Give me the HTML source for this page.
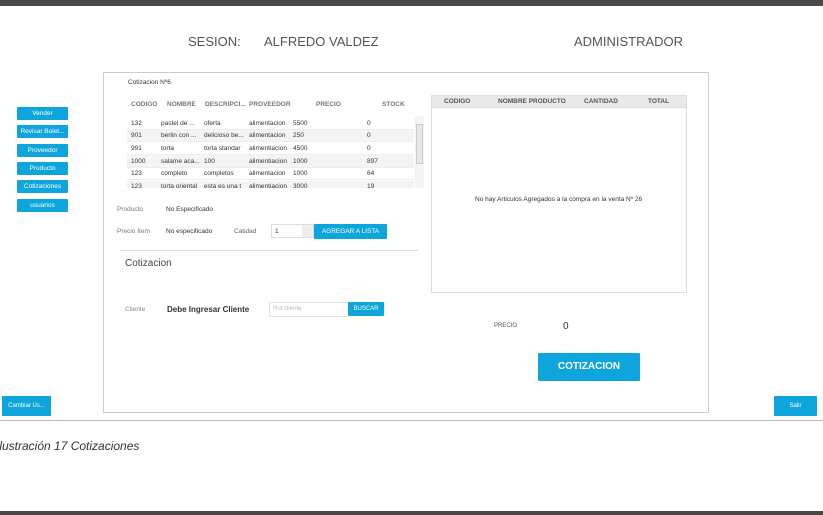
<!DOCTYPE html>
<html><head><meta charset="utf-8"><style>
*{margin:0;padding:0;box-sizing:border-box}
body{width:823px;height:515px;background:#fff;position:relative;overflow:hidden;font-family:"Liberation Sans",sans-serif;color:#444}
.a{position:absolute;white-space:nowrap}
.btn{position:absolute;background:#0ea5dc;color:#fff;font-size:6.5px;text-align:center;border-radius:1px}
.t{font-size:6.5px;color:#333}
.h{font-size:6.5px;color:#777;font-weight:bold}
.row{position:absolute;left:127px;width:287px;height:12.7px;border-bottom:1px solid #eee}
.row span{position:absolute;top:2.5px;font-size:6.5px;color:#333}
</style></head><body>
<div class="a" style="left:0;top:0;width:823px;height:6px;background:#4a4846"></div>
<div class="a" style="left:0;top:511px;width:823px;height:4px;background:#4a4846"></div>

<div class="a" style="left:188px;top:34px;font-size:13px;color:#555">SESION:</div>
<div class="a" style="left:264px;top:34px;font-size:13px;color:#555">ALFREDO VALDEZ</div>
<div class="a" style="left:574px;top:34px;font-size:13px;color:#555">ADMINISTRADOR</div>

<div class="btn" style="left:17px;top:107px;width:51px;height:13px;line-height:13px">Vender</div>
<div class="btn" style="left:17px;top:125px;width:51px;height:13px;line-height:13px">Revisar Bolet...</div>
<div class="btn" style="left:17px;top:144px;width:51px;height:13px;line-height:13px">Proveedor</div>
<div class="btn" style="left:17px;top:162px;width:51px;height:13px;line-height:13px">Producto</div>
<div class="btn" style="left:17px;top:180px;width:51px;height:13px;line-height:13px">Cotizaciones</div>
<div class="btn" style="left:17px;top:199px;width:51px;height:13px;line-height:13px">usuarios</div>
<div class="btn" style="left:2px;top:396px;width:49px;height:20px;line-height:20px;font-size:6px">Cambiar Us...</div>
<div class="btn" style="left:774px;top:396px;width:43px;height:20px;line-height:20px;font-size:6px">Salir</div>

<div class="a" style="left:103px;top:72px;width:606px;height:341px;border:1px solid #ccc"></div>
<div class="a" style="left:0;top:420px;width:823px;height:1px;background:#bbb"></div>
<div class="a" style="left:-4px;top:439px;font-size:12px;font-style:italic;color:#333">Ilustración 17 Cotizaciones</div>

<div class="a t" style="left:128px;top:79px">Cotizacion Nº6</div>
<div class="a h" style="left:131px;top:101px">CODIGO</div>
<div class="a h" style="left:167px;top:101px">NOMBRE</div>
<div class="a h" style="left:205px;top:101px">DESCRIPCI...</div>
<div class="a h" style="left:249px;top:101px">PROVEEDOR</div>
<div class="a h" style="left:316px;top:101px">PRECIO</div>
<div class="a h" style="left:382px;top:101px">STOCK</div>

<div class="a" style="left:127px;top:117px;width:287px;height:71px;overflow:hidden">
<div class="row" style="left:0;top:0"><span style="left:4px">132</span><span style="left:34px">pastel de ...</span><span style="left:77px">oferta</span><span style="left:122px">alimentacion</span><span style="left:166px">5500</span><span style="left:240px">0</span></div>
<div class="row" style="left:0;top:12.7px;background:#f4f4f4"><span style="left:4px">901</span><span style="left:34px">berlin con ...</span><span style="left:77px">delicioso be...</span><span style="left:122px">alimentacion</span><span style="left:166px">250</span><span style="left:240px">0</span></div>
<div class="row" style="left:0;top:25.4px"><span style="left:4px">991</span><span style="left:34px">torta</span><span style="left:77px">torta standar</span><span style="left:122px">alimentiacion</span><span style="left:166px">4500</span><span style="left:240px">0</span></div>
<div class="row" style="left:0;top:38.1px;background:#f4f4f4"><span style="left:4px">1000</span><span style="left:34px">salame aca...</span><span style="left:77px">100</span><span style="left:122px">alimentiacion</span><span style="left:166px">1000</span><span style="left:240px">897</span></div>
<div class="row" style="left:0;top:50.8px"><span style="left:4px">123</span><span style="left:34px">completo</span><span style="left:77px">completos</span><span style="left:122px">alimentacion</span><span style="left:166px">1000</span><span style="left:240px">64</span></div>
<div class="row" style="left:0;top:63.5px;background:#f4f4f4"><span style="left:4px">123</span><span style="left:34px">torta oriental</span><span style="left:77px">esta es una t</span><span style="left:122px">alimentiacion</span><span style="left:166px">3000</span><span style="left:240px">19</span></div>
</div>
<div class="a" style="left:415px;top:116px;width:9px;height:72px;background:#f4f4f4"></div>
<div class="a" style="left:416px;top:124px;width:7px;height:40px;background:#e6e6e6;border:1px solid #ccc"></div>

<div class="a t" style="left:117px;top:206px;color:#777">Producto</div>
<div class="a t" style="left:166px;top:206px">No Especificado</div>
<div class="a t" style="left:117px;top:228px;color:#777">Precio Item</div>
<div class="a t" style="left:166px;top:228px">No especificado</div>
<div class="a t" style="left:234px;top:228px;color:#666">Catidad</div>
<div class="a" style="left:271px;top:224px;width:43px;height:14px;border:1px solid #ddd"></div>
<div class="a t" style="left:275px;top:228px">1</div>
<div class="a" style="left:302px;top:225px;width:11px;height:12px;background:#eee"></div>
<div class="btn" style="left:314px;top:224px;width:73px;height:15px;line-height:15px;font-size:6.5px">AGREGAR A LISTA</div>

<div class="a" style="left:120px;top:250px;width:298px;height:1px;background:#ddd"></div>
<div class="a" style="left:125px;top:258px;font-size:10px;color:#444">Cotizacion</div>
<div class="a t" style="left:125px;top:306px;color:#888">Cliente</div>
<div class="a" style="left:167px;top:305px;font-size:8px;font-weight:bold;color:#333">Debe Ingresar Cliente</div>
<div class="a" style="left:269px;top:302px;width:80px;height:15px;border:1px solid #e4e4e4"></div>
<div class="a" style="left:273px;top:306px;font-size:6px;color:#bbb">Rut cliente</div>
<div class="btn" style="left:348px;top:302px;width:36px;height:14px;line-height:14px;font-size:6px">BUSCAR</div>

<div class="a" style="left:431px;top:95px;width:256px;height:198px;border:1px solid #ddd"></div>
<div class="a" style="left:432px;top:96px;width:254px;height:12px;background:#e9e9e9;border-bottom:1px solid #ddd"></div>
<div class="a h" style="left:444px;top:98px;color:#555">CODIGO</div>
<div class="a h" style="left:498px;top:98px;color:#555">NOMBRE PRODUCTO</div>
<div class="a h" style="left:584px;top:98px;color:#555">CANTIDAD</div>
<div class="a h" style="left:648px;top:98px;color:#555">TOTAL</div>
<div class="a t" style="left:475px;top:196px">No hay Articulos Agregados a la compra en la venta Nº 26</div>

<div class="a" style="left:494px;top:323px;font-size:6px;color:#555">PRECIO</div>
<div class="a" style="left:563px;top:321px;font-size:10px;color:#333">0</div>
<div class="btn" style="left:538px;top:353px;width:102px;height:28px;line-height:28px;font-size:10px;font-weight:bold">COTIZACION</div>
</body></html>
